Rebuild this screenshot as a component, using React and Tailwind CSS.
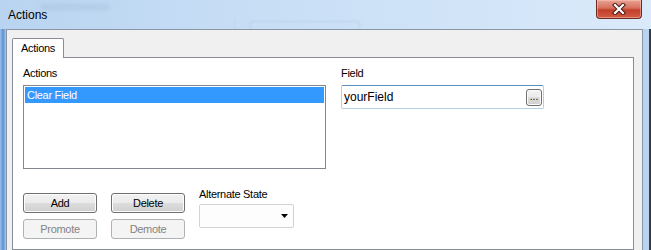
export default function App() {
  const btn =
    "h-[20px] rounded-[3px] border border-[#707070] bg-[linear-gradient(180deg,#f2f2f2_0%,#ebebeb_49%,#dddddd_50%,#cfcfcf_100%)] shadow-[inset_0_0_0_1px_#fcfcfc] text-[11px] leading-[18px] text-black text-center";
  const btnDis =
    "h-[20px] rounded-[3px] border border-[#adb2b5] bg-[#f4f4f4] text-[11px] leading-[18px] text-[#838383] text-center";
  return (
    <div className="w-[651px] h-[250px] overflow-hidden flex flex-col bg-[#c4dbf3] font-['Liberation_Sans',Arial,sans-serif] text-black tracking-[-0.3px]">
      {/* Title bar */}
      <div className="h-[29px] shrink-0 flex justify-between items-start bg-[linear-gradient(90deg,#b9d4f0_0%,#c6ddf5_35%,#d1e4f8_70%,#daeafa_100%)] relative overflow-hidden">
        <div className="absolute left-[40px] top-[4px] w-[70px] h-[6px] rounded-[2px] bg-[#9fb9d6] opacity-40 blur-[2px]" />
        <div className="absolute left-[250px] top-[21px] w-[110px] h-[12px] rounded-[2px] border border-[#a6bfdb] opacity-50 blur-[1px]" />
        <div className="absolute left-[40px] top-[19px] w-[195px] h-[12px] border-r border-[#a8c2df] opacity-40 blur-[1px]" />
        <span className="relative ml-[8px] mt-[8px] text-[12px] leading-[14px] tracking-normal">Actions</span>
        <div className="relative mr-[9px] w-[46px] h-[19px] rounded-b-[4px] border border-t-0 border-[#6b2b22] bg-[linear-gradient(180deg,#eaa394_0%,#d66f5d_45%,#c23f2b_55%,#d35b43_100%)] shadow-[inset_0_0_0_1px_rgba(255,210,200,0.45)] flex items-center justify-center">
          <svg width="16" height="12" viewBox="0 0 16 12">
            <path d="M4 2 L12 10 M12 2 L4 10" stroke="#4a1a12" strokeWidth="4.2" strokeLinecap="square" fill="none" />
            <path d="M4 2 L12 10 M12 2 L4 10" stroke="#ffffff" strokeWidth="2.2" strokeLinecap="square" fill="none" />
          </svg>
        </div>
      </div>

      {/* Body */}
      <div className="flex flex-1 min-h-0">
        <div className="w-[6px] shrink-0 bg-[linear-gradient(90deg,#9ec0ea_0%,#5d91d2_50%,#a6c7ee_100%)]" />
        <div className="w-[637px] shrink-0 border-l border-t border-r border-[#8896a6] bg-[#f0f0f0] pt-[8px] pl-[5px] flex flex-col">
          {/* Tab header */}
          <div className="relative z-10 -mb-[1px] w-[52px] h-[20px] border-t border-l border-r border-[#898c95] bg-white text-[11px] leading-[13px] flex items-center justify-center rounded-t-[2px]">
            Actions
          </div>
          {/* Panel */}
          <div className="w-[622px] flex-1 border border-[#898c95] bg-white pt-[9px] pl-[10px] flex flex-col">
            <div className="flex gap-[15px]">
              <div className="w-[303px] flex flex-col">
                <div className="text-[11px] leading-[13px]">Actions</div>
                <div className="mt-[5px] h-[84px] border border-[#828790] bg-white p-[1px]">
                  <div className="h-[16px] bg-[#3399ff] text-white text-[11px] leading-[16px] pl-[2px]">
                    Clear Field
                  </div>
                </div>
              </div>
              <div className="flex flex-col">
                <div className="text-[11px] leading-[13px]">Field</div>
                <div className="mt-[5px] w-[203px] h-[24px] border border-[#b5cfe7] border-t-[#5d8fbd] rounded-[2px] bg-white flex items-center pl-[2px] pr-[1px]">
                  <span className="text-[12px] leading-[14px] tracking-normal">yourField</span>
                  <div className="ml-auto w-[16px] h-[17px] rounded-[3px] border border-[#707070] bg-[linear-gradient(180deg,#f2f2f2_0%,#ebebeb_49%,#dddddd_50%,#cfcfcf_100%)] shadow-[inset_0_0_0_1px_#fcfcfc] text-[10px] leading-[14px] text-center tracking-normal">
                    ...
                  </div>
                </div>
              </div>
            </div>

            <div className="mt-[19px] flex items-start">
              <div className="mt-[5px] grid grid-cols-[74px_74px] gap-x-[14px] gap-y-[6px]">
                <div className={btn}>Add</div>
                <div className={btn}>Delete</div>
                <div className={btnDis}>Promote</div>
                <div className={btnDis}>Demote</div>
              </div>
              <div className="ml-[14px] flex flex-col">
                <div className="text-[11px] leading-[13px]">Alternate State</div>
                <div className="mt-[3px] w-[95px] h-[24px] rounded-[2px] border border-[#d3d3d3] bg-[#fdfdfd] flex items-center justify-end pr-[5px]">
                  <svg width="7" height="4" viewBox="0 0 7 4">
                    <path d="M0 0 H7 L3.5 4 Z" fill="#000" />
                  </svg>
                </div>
              </div>
            </div>
          </div>
        </div>
        <div className="w-[6px] shrink-0 bg-[#b7d3f2]" />
        <div className="w-[2px] shrink-0 bg-[#3c3c3c]" />
      </div>
    </div>
  );
}
